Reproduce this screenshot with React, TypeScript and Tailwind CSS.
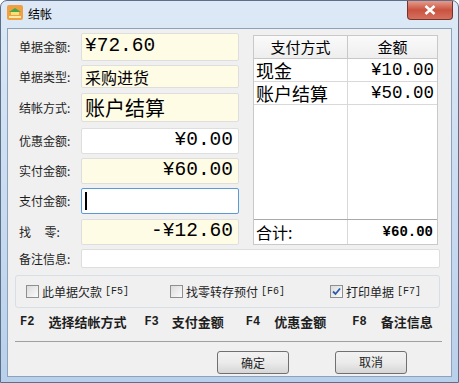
import React from "react";

const CJK = "font-['Noto_Sans_CJK_SC',sans-serif]";
const MONO = "font-['Liberation_Mono','Noto_Sans_CJK_SC',monospace]";

type RowProps = {
  label: string;
  className: string;
  yellow?: boolean;
  focus?: boolean;
  children?: React.ReactNode;
};

const FieldRow = ({ label, className, yellow, focus, children }: RowProps) => {
  return (
    <div className={`flex items-center ${className}`}>
      <div className={`w-[62px] text-[12px] text-[#1e1e1e] ${CJK} whitespace-pre`}>{label}</div>
      <div
        className={`flex h-full w-[158px] items-center rounded-[2px] border px-[3px] ${
          focus
            ? "border-[#5b9bd5] bg-white"
            : yellow
            ? "border-[#dedede] bg-[#fffce6]"
            : "border-[#dedede] bg-white"
        }`}
      >
        {children}
      </div>
    </div>
  );
};

const Checkbox = ({ checked }: { checked?: boolean }) => (
  <span className="flex h-[13px] w-[13px] items-center justify-center border border-[#8e8f8f] bg-gradient-to-br from-[#dcdcdc] to-[#fbfbfb]">
    {checked && (
      <svg width="9" height="9" viewBox="0 0 9 9">
        <path d="M1 4.5 L3.5 7 L8 1.5" stroke="#2a5bb0" strokeWidth="1.8" fill="none" />
      </svg>
    )}
  </span>
);

const WinButton = ({ text }: { text: string }) => (
  <button
    className={`h-[23px] w-[72px] rounded-[3px] border border-[#707070] bg-gradient-to-b from-[#f2f2f2] via-[#ebebeb] to-[#d6d6d6] text-[12px] text-[#1e1e1e] ${CJK}`}
  >
    {text}
  </button>
);

const AppIcon = () => (
  <svg width="16" height="15" viewBox="0 0 16 15">
    <rect x="0" y="0" width="16" height="15" rx="2" fill="#f0a040" />
    <path d="M2 7 L8 3 L14 7 Z" fill="#4aa64a" />
    <rect x="4" y="7" width="8" height="3" fill="#f7e27a" />
    <rect x="2" y="11" width="12" height="2" fill="#fbe9a8" />
  </svg>
);

export default function App() {
  return (
    <div className="relative h-[383px] w-[459px] overflow-hidden rounded-t-[7px] border border-[#5d6f86] bg-gradient-to-b from-[#dde9f6] via-[#cadcf1] to-[#b9d0eb]">
      <div className="flex h-[27px] items-start">
        <div className="ml-[6px] mt-[4px]">
          <AppIcon />
        </div>
        <div className={`ml-[5px] mt-[4px] text-[12px] text-black ${CJK}`}>结帐</div>
        <div className="ml-auto mr-[5px] flex h-[19px] w-[46px] items-center justify-center rounded-b-[4px] border border-t-0 border-[#7a3128] bg-gradient-to-b from-[#e49a8d] via-[#c9523f] to-[#d4715f]">
          <svg width="12" height="10" viewBox="0 0 12 10">
            <path d="M1.5 1 L10.5 9 M10.5 1 L1.5 9" stroke="#ffffff" strokeWidth="2.6" />
          </svg>
        </div>
      </div>

      <div className="mx-[6px] flex h-[349px] flex-col border border-[#8da2bc] bg-[#f0f0f0] pl-[11px] pr-[11px]">
        <div className="mt-[4px] flex">
          <div className="flex w-[220px] flex-col">
            <FieldRow label="单据金额:" className="h-[28px]" yellow>
              <span className={`${MONO} text-[19.5px] text-black`}>¥72.60</span>
            </FieldRow>
            <FieldRow label="单据类型:" className="mt-[4px] h-[23px]" yellow>
              <span className={`${CJK} text-[16px] leading-none text-black`}>采购进货</span>
            </FieldRow>
            <FieldRow label="结帐方式:" className="mt-[5px] h-[29px]" yellow>
              <span className={`${CJK} text-[20px] leading-none text-black`}>账户结算</span>
            </FieldRow>
            <FieldRow label="优惠金额:" className="mt-[6px] h-[26px]">
              <span className={`ml-auto pr-[2px] ${MONO} text-[19.5px] text-black`}>¥0.00</span>
            </FieldRow>
            <FieldRow label="实付金额:" className="mt-[4px] h-[26px]" yellow>
              <span className={`ml-auto pr-[2px] ${MONO} text-[19.5px] text-black`}>¥60.00</span>
            </FieldRow>
            <FieldRow label="支付金额:" className="mt-[4px] h-[26px]" focus>
              <span className="h-[18px] w-[2px] bg-black" />
            </FieldRow>
            <FieldRow label={"找     零:"} className="mt-[5px] h-[26px]" yellow>
              <span className={`ml-auto pr-[2px] ${MONO} text-[19.5px] text-black`}>-¥12.60</span>
            </FieldRow>
          </div>

          <div className="ml-[14px] mt-[2px] flex h-[210px] w-[185px] flex-col border border-[#c9c9c9] bg-white">
            <div className={`flex h-[23px] ${CJK} text-[15px] text-black`}>
              <div className="flex w-[94px] items-center justify-center border-b border-r border-[#c8c8c8] bg-gradient-to-b from-[#fafafa] to-[#eeeeee]">
                支付方式
              </div>
              <div className="flex flex-1 items-center justify-center border-b border-[#c8c8c8] bg-gradient-to-b from-[#fafafa] to-[#eeeeee]">
                金额
              </div>
            </div>
            <div className="flex h-[23px] border-b border-[#d9d9d9]">
              <div className={`flex w-[94px] items-center border-r border-[#d9d9d9] pl-[2px] ${CJK} text-[18px] leading-[22px] text-black`}>现金</div>
              <div className={`flex flex-1 items-center justify-end pr-[3px] ${MONO} text-[17.5px] leading-[22px] text-black`}>¥10.00</div>
            </div>
            <div className="flex h-[23px] border-b border-[#d9d9d9]">
              <div className={`flex w-[94px] items-center border-r border-[#d9d9d9] pl-[2px] ${CJK} text-[18px] leading-[22px] text-black`}>账户结算</div>
              <div className={`flex flex-1 items-center justify-end pr-[3px] ${MONO} text-[17.5px] leading-[22px] text-black`}>¥50.00</div>
            </div>
            <div className="flex flex-1">
              <div className="w-[94px] border-r border-[#d9d9d9]" />
            </div>
            <div className="flex h-[25px] border-t border-[#a8a8a8]">
              <div className={`flex w-[94px] items-center border-r border-[#d9d9d9] pl-[2px] ${CJK} text-[16px] leading-none text-black`}>合计:</div>
              <div className={`flex flex-1 items-center justify-end pr-[4px] ${MONO} text-[14px] font-bold text-black`}>¥60.00</div>
            </div>
          </div>
        </div>

        <div className="mt-[4px] flex h-[19px] items-center">
          <div className={`w-[62px] text-[12px] text-[#1e1e1e] ${CJK}`}>备注信息:</div>
          <div className="h-full flex-1 rounded-[2px] border border-[#dedede] bg-white" />
        </div>

        <div className={`-ml-[4px] mt-[7px] flex h-[33px] items-center rounded-[3px] border border-[#d5dfe5] pl-[10px] text-[12px] text-[#1e1e1e] ${CJK}`}>
          <div className="flex items-center gap-[3px]">
            <Checkbox />
            <span>此单据欠款</span>
            <span className={`${MONO} text-[10px]`}>[F5]</span>
          </div>
          <div className="ml-[41px] flex items-center gap-[3px]">
            <Checkbox />
            <span>找零转存预付</span>
            <span className={`${MONO} text-[10px]`}>[F6]</span>
          </div>
          <div className="ml-[45px] flex items-center gap-[3px]">
            <Checkbox checked />
            <span>打印单据</span>
            <span className={`${MONO} text-[10px]`}>[F7]</span>
          </div>
        </div>

        <div className={`mt-[6px] flex h-[16px] items-center pl-[1px] text-[13px] font-bold text-[#1e1e1e] ${CJK}`}>
          <span className={`${MONO} text-[12px]`}>F2</span>
          <span className="ml-[14px]">选择结帐方式</span>
          <span className={`ml-[18px] ${MONO} text-[12px]`}>F3</span>
          <span className="ml-[13px]">支付金额</span>
          <span className={`ml-[22px] ${MONO} text-[12px]`}>F4</span>
          <span className="ml-[14px]">优惠金额</span>
          <span className={`ml-[26px] ${MONO} text-[12px]`}>F8</span>
          <span className="ml-[14px]">备注信息</span>
        </div>

        <div className="-ml-[4px] mt-[11px] h-[1px] w-[427px] bg-[#a0a0a0]" />

        <div className="mt-[9px] flex pl-[198px]">
          <WinButton text="确定" />
          <div className="ml-[46px] -mt-[2px]">
            <WinButton text="取消" />
          </div>
        </div>
      </div>
    </div>
  );
}
